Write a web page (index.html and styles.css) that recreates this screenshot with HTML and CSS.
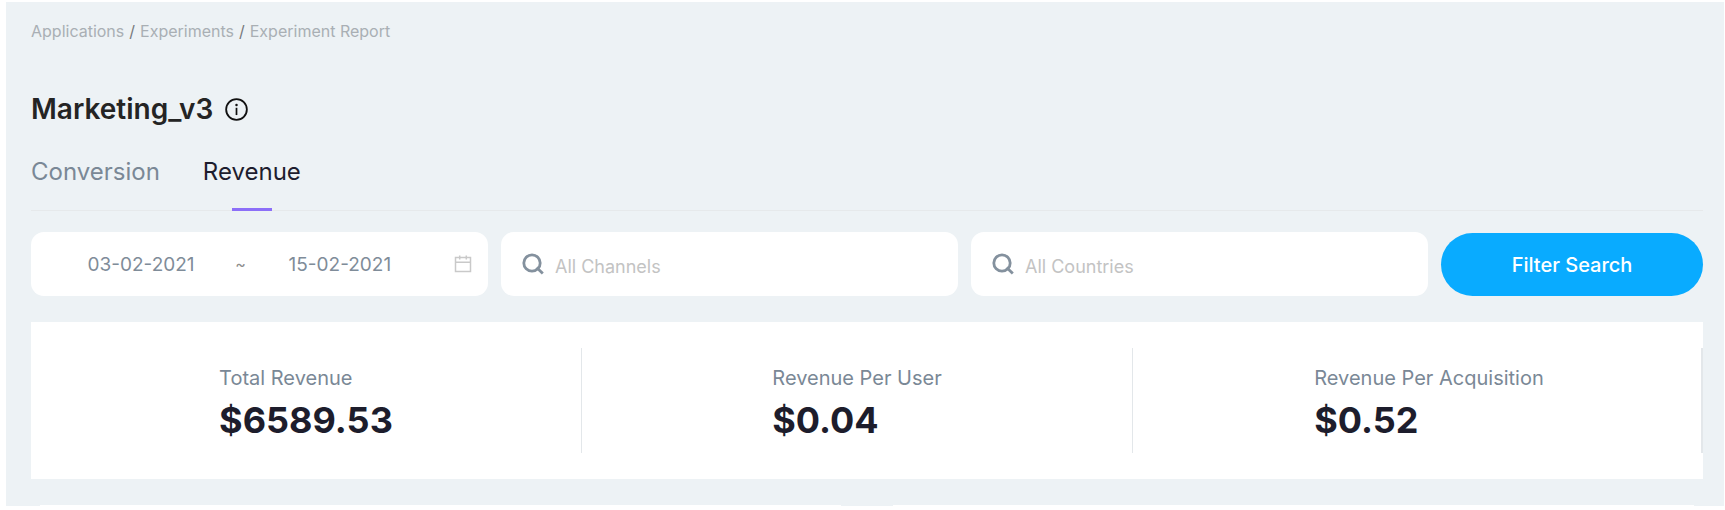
FILE: index.html
```html
<!DOCTYPE html>
<html lang="en">
<head>
<meta charset="utf-8">
<title>Experiment Report</title>
<link rel="stylesheet" href="styles.css">
</head>
<body>
<main class="page">
  <nav class="breadcrumb" aria-label="Breadcrumb">
    <a href="#">Applications</a><span class="separator">/</span><a href="#">Experiments</a><span class="separator">/</span><a href="#">Experiment Report</a>
  </nav>

  <header class="heading">
    <h1 class="title">Marketing_v3</h1>
    <button class="info" type="button" aria-label="Experiment details">
      <svg class="info-icon" viewBox="0 0 24 24" fill="none" stroke="currentColor" stroke-width="1.9">
        <circle cx="12" cy="12" r="10.8"/>
        <path d="M12 10.2v7.6" stroke-width="1.8"/>
        <circle cx="12" cy="7.2" r="1.3" fill="currentColor" stroke="none"/>
      </svg>
    </button>
  </header>

  <div class="tabs" role="tablist">
    <button class="tab" type="button" role="tab" aria-selected="false">Conversion</button>
    <button class="tab tab-active" type="button" role="tab" aria-selected="true">Revenue</button>
  </div>

  <form class="filters">
    <div class="field date-range">
      <input class="date" type="text" aria-label="Start date" value="03-02-2021">
      <span class="tilde">~</span>
      <input class="date" type="text" aria-label="End date" value="15-02-2021">
      <svg class="calendar-icon" viewBox="0 0 18 18" fill="none" stroke="currentColor" stroke-width="1.5">
        <path d="M1.5 2.5h15v14h-15zM1.5 7.3h15M5.7.5v4M12.3.5v4"/>
      </svg>
    </div>
    <label class="field search">
      <svg class="search-icon" viewBox="0 0 22 22" fill="none" stroke="currentColor" stroke-width="2.8">
        <circle cx="10" cy="10" r="8.2"/>
        <path d="M14.6 14.6l6.2 6"/>
      </svg>
      <input class="search-input" type="text" aria-label="Channels" placeholder="All Channels">
    </label>
    <label class="field search">
      <svg class="search-icon" viewBox="0 0 22 22" fill="none" stroke="currentColor" stroke-width="2.8">
        <circle cx="10" cy="10" r="8.2"/>
        <path d="M14.6 14.6l6.2 6"/>
      </svg>
      <input class="search-input" type="text" aria-label="Countries" placeholder="All Countries">
    </label>
    <button class="submit" type="button">Filter Search</button>
  </form>

  <section class="stats">
    <div class="stat"><div><div class="stat-label">Total Revenue</div><div class="stat-value">$6589.53</div></div></div>
    <div class="stat"><div><div class="stat-label">Revenue Per User</div><div class="stat-value">$0.04</div></div></div>
    <div class="stat stat-last"><div><div class="stat-label">Revenue Per Acquisition</div><div class="stat-value">$0.52</div></div></div>
  </section>

  <div class="charts">
    <div class="chart"></div>
    <div class="chart"></div>
  </div>
</main>
</body>
</html>
```
FILE: styles.css
```css
* { box-sizing: border-box; }

body {
  margin: 0;
  background: #fff;
  font-family: Inter, "Liberation Sans", sans-serif;
  color: #1d1d2c;
}

button, input { font: inherit; color: inherit; border: 0; background: none; padding: 0; }

.page {
  margin: 2px 1px 0 6px;
  padding: 17px 21px 0 25px;
  background: #edf2f5;
}

.breadcrumb { font-size: 16px; line-height: 24px; color: #a9afb4; }
.breadcrumb a { color: inherit; text-decoration: none; }
.separator { margin: 0 5px; color: #77797c; }

.heading { display: flex; align-items: center; gap: 12px; margin-top: 48px; }
.title { margin: 0; font-size: 28px; line-height: 36px; font-weight: 600; color: #242424; }
.info { display: flex; color: #111; }
.info-icon { width: 23px; height: 23px; }

.tabs {
  display: flex;
  gap: 43px;
  margin-top: 25px;
  border-bottom: 1px solid #e6e9eb;
}
.tab {
  position: relative;
  padding-bottom: 18px;
  font-size: 24px;
  line-height: 40px;
  color: #7a8896;
}
.tab-active { color: #1d1d2e; }
.tab-active::after {
  content: "";
  position: absolute;
  left: calc(50% - 20px);
  bottom: -1px;
  width: 40px;
  height: 3px;
  background: #8c6ff8;
}

.filters {
  display: grid;
  grid-template-columns: 457fr 457fr 457fr 262fr;
  gap: 13px;
  margin-top: 21px;
}
.field {
  display: flex;
  align-items: center;
  min-width: 0;
  height: 64px;
  border-radius: 13px;
  background: #fff;
}
.date-range { padding: 0 16px; font-size: 19px; color: #7f8c99; }
.date { flex: 1; min-width: 0; width: 0; text-align: center; }
.tilde { color: #8e8e8e; font-size: 16px; }
.calendar-icon { width: 18px; height: 18px; margin-left: 20px; color: #c9c9c9; }
.search { gap: 11px; padding: 0 21px; }
.search-icon { width: 22px; height: 22px; color: #84919e; }
.search-input { flex: 1; min-width: 0; padding-top: 4px; font-size: 18px; }
.search-input::placeholder { color: #c3c3c3; opacity: 1; }
.submit {
  height: 63px;
  align-self: end;
  border-radius: 32px;
  background: #09abff;
  color: #fff;
  font-size: 20px;
  font-weight: 500;
}

.stats {
  display: grid;
  grid-template-columns: 551fr 551fr 570fr;
  margin-top: 26px;
  padding: 26px 0;
  background: #fff;
}
.stat {
  display: flex;
  justify-content: center;
  padding: 17px 0 9px;
  border-right: 1px solid #e3e7ea;
}
.stat-last { padding-left: 24px; border-right-width: 2px; }
.stat-label { font-size: 20px; line-height: 26px; color: #7a8896; }
.stat-value { margin-top: 5px; font-size: 36px; line-height: 48px; font-weight: 700; }

.charts {
  display: grid;
  grid-template-columns: 1fr 1fr;
  gap: 52px;
  margin-top: 26px;
  padding: 0 9px;
}
.chart { height: 1px; background: #fff; }
```
